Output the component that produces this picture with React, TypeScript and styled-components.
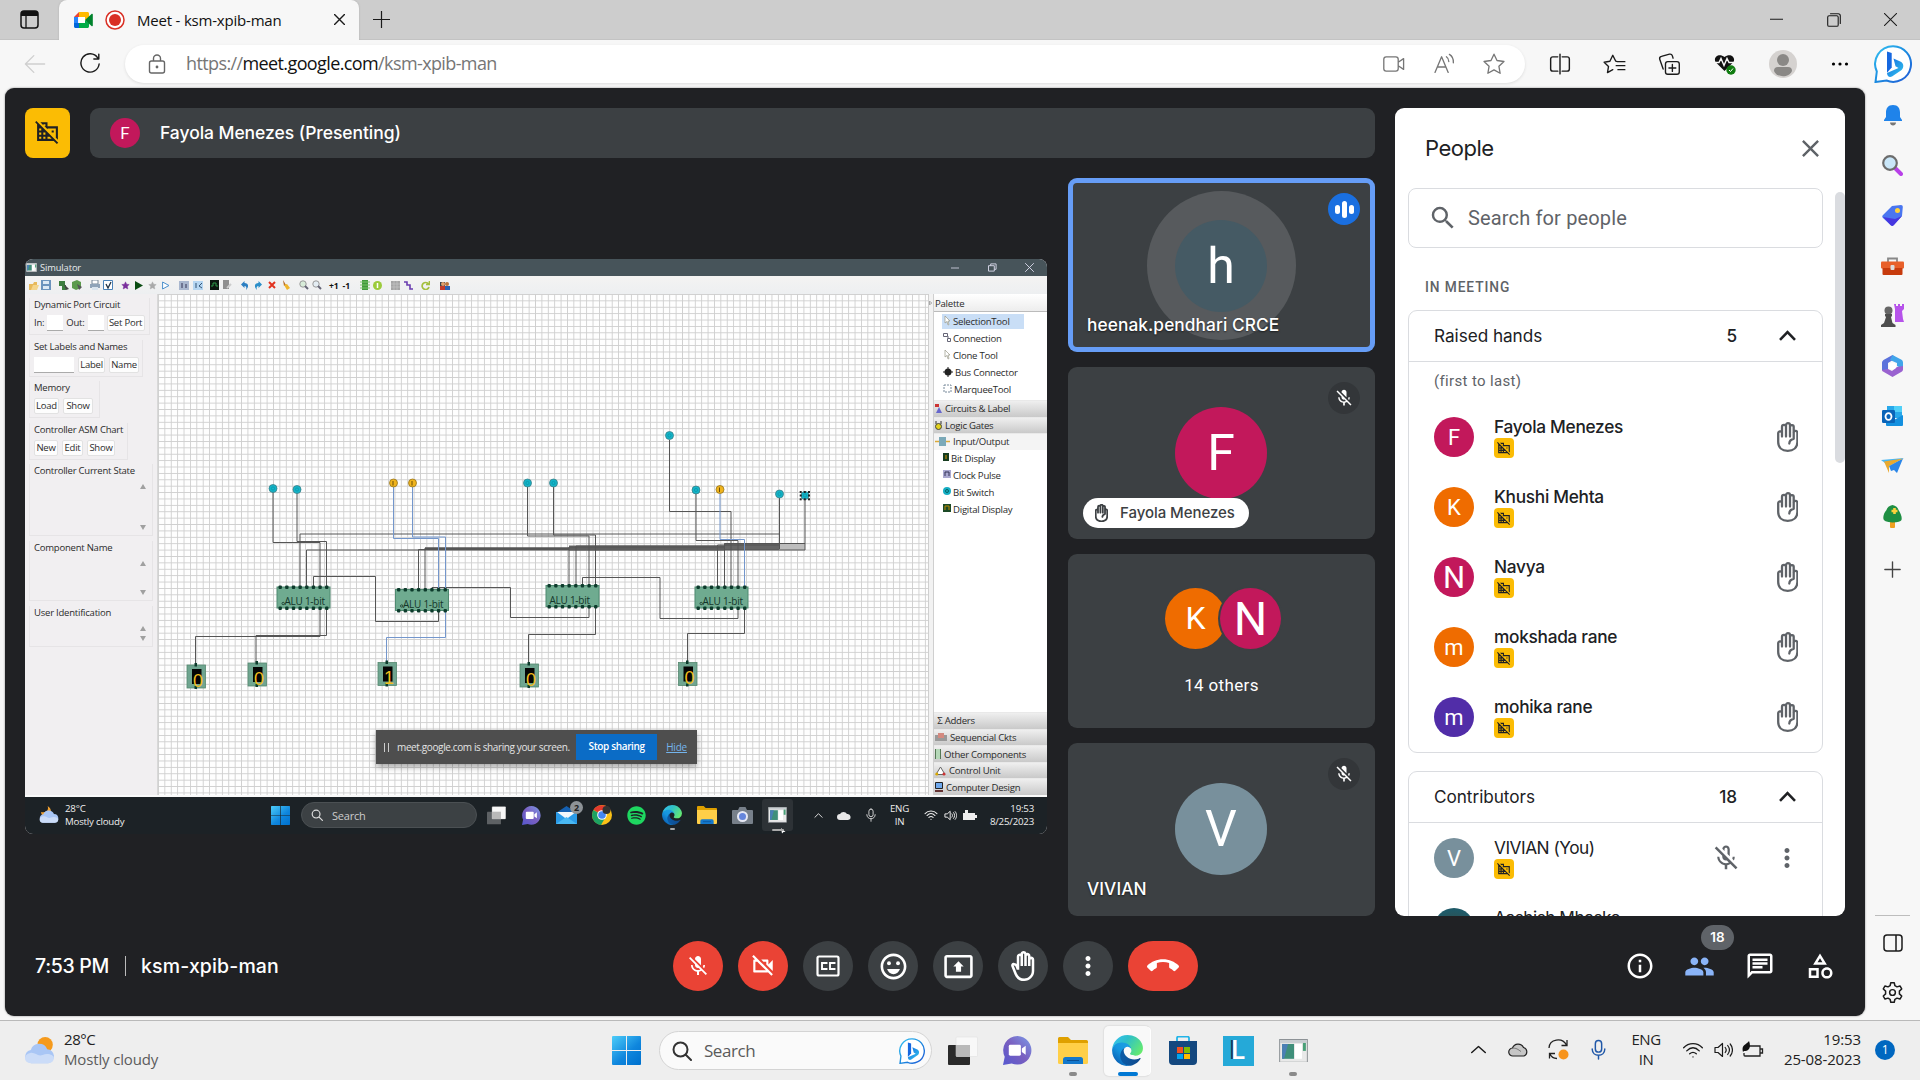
import React from "react";
import styled, { createGlobalStyle, css } from "styled-components";
import {
  MdMicOff, MdOutlineMicOff, MdOutlineVideocamOff, MdOutlineEmojiEmotions, MdOutlinePresentToAll,
  MdOutlineBackHand, MdMoreVert, MdCallEnd, MdInfoOutline, MdPeople, MdOutlineChat, MdOutlineCategory,
  MdDomainDisabled, MdSearch, MdClose,
} from "react-icons/md";
import { FaSpotify } from "react-icons/fa";

const segoe = `"Open Sans", "Noto Sans", sans-serif`;
const google = `Inter, Roboto, sans-serif`;

const Global = createGlobalStyle`
  * { box-sizing: border-box; }
  html, body { margin: 0; width: 1920px; height: 1080px; overflow: hidden; background: #f7f7f7; }
  body { font-family: ${segoe}; color: #202124; }
  svg { display: block; flex: none; }
`;

/* ---------- page frame ---------- */

const Screen = styled.div`
  width: 1920px; height: 1080px; display: grid; overflow: hidden;
  grid-template-rows: 40px 48px 932px 60px;
`;
const Body = styled.div`
  display: grid; grid-template-columns: 1860px 1fr; padding: 0 0 4px 5px; background: #f7f7f7;
`;

/* ---------- tab strip ---------- */

const TabStrip = styled.header`
  background: #cdcdcd; display: flex; align-items: center; border-bottom: 1px solid #c3c3c3;
`;
const StripButton = styled.div<{ $w: number }>`
  width: ${p => p.$w}px; height: 40px; display: flex; align-items: center; justify-content: center;
`;
const Tab = styled.div`
  width: 300px; height: 40px; align-self: flex-start; background: #f7f7f7; border-radius: 8px 8px 0 0;
  display: flex; align-items: center; padding-left: 15px; gap: 12px; font-size: 15px; letter-spacing: -0.2px;
  color: #111; flex: none; box-shadow: 0 0 2px #aaa; padding-bottom: 1px;
  svg:last-child { margin-left: auto; margin-right: 14px; }
`;
const WindowButtons = styled.div`
  margin-left: auto; display: flex; padding-right: 1px;
`;

/* ---------- address bar ---------- */

const Toolbar = styled.div`
  background: #f7f7f7; display: flex; align-items: center; padding-left: 23px;
`;
const Address = styled.div`
  width: 1400px; height: 38px; border-radius: 19px; background: #fff; margin-left: 24px; flex: none; box-shadow: 0 1px 3px #ddd;
  display: flex; align-items: center; padding: 0 19px 0 22px; font-size: 18px; letter-spacing: -0.61px; color: #767676;
  b { font-weight: 400; color: #111; }
  span { margin-left: 19px; margin-top: -2px; }
`;
const AddressIcons = styled.div`
  margin-left: auto; display: flex; gap: 26px; align-items: center;
`;
const ToolIcons = styled.div`
  display: flex; align-items: center; margin-left: 7px;
`;
const ToolSlot = styled.div<{ $w?: number }>`
  width: ${p => p.$w ?? 55}px; display: flex; justify-content: center;
`;

/* ---------- edge sidebar ---------- */

const Sidebar = styled.aside`
  display: flex; flex-direction: column; align-items: center; padding: 2px 0 0 0; height: 930px;
`;
const SideSlot = styled.div`
  height: 50.2px; width: 100%; display: flex; align-items: center; justify-content: center; flex: none;
`;
const SideRule = styled.div`
  width: 35px; height: 1px; background: #bdbdbd; margin: auto 0 2px;
`;

/* ---------- meet ---------- */

const Meet = styled.main`
  background: #202124; border-radius: 9px; height: 928px; display: grid; overflow: hidden;
  grid-template-columns: 1350px 450px; column-gap: 20px; grid-template-rows: 808px 1fr; padding: 20px 20px 0 20px;
  font-family: ${google}; box-shadow: 0 0 2px #777;
`;
const Stage = styled.section`
  display: grid; grid-template-columns: 1022px 307px; column-gap: 21px; grid-template-rows: 50px 738px; row-gap: 20px;
`;
const StageHead = styled.div`
  grid-column: 1 / 3; display: flex; gap: 20px;
`;
const DomainButton = styled.div`
  width: 45px; height: 50px; border-radius: 8px; background: #fbbc04; color: #202124; display: flex; align-items: center; justify-content: center;
  padding-bottom: 4px;
`;
const PresenterBar = styled.div`
  flex: 1; background: #3c4043; border-radius: 9px; display: flex; align-items: center; padding-left: 20px; gap: 20px;
  color: #fff; font-weight: 500; font-size: 17.5px; letter-spacing: -0.06px;
  span { margin-top: -2px; }
`;
const Avatar = styled.div<{ $s: number; $c: string; $f: number }>`
  width: ${p => p.$s}px; height: ${p => p.$s}px; border-radius: 50%; background: ${p => p.$c}; color: #fff; flex: none;
  display: flex; align-items: center; justify-content: center; font: 400 ${p => p.$f}px Roboto, sans-serif; letter-spacing: 0;
`;
const Tiles = styled.div`
  display: grid; grid-template-rows: 174px 172px 174px 173px; row-gap: 15px;
`;
const Tile = styled.div<{ $active?: boolean; $last?: boolean }>`
  position: relative; background: #3c4043; border-radius: 9px; display: flex; flex-direction: column; align-items: center; justify-content: center;
  padding: 0 1px ${p => (p.$last ? 1 : 0)}px 0;
  ${p => p.$active && css`box-shadow: inset 0 0 0 5px #669df6; padding-top: 1px;`}
`;
const VoiceRing = styled.div`
  width: 149px; height: 149px; border-radius: 50%; background: #575a5d; display: flex; align-items: center; justify-content: center;
`;
const TileChip = styled.div<{ $c: string }>`
  position: absolute; top: 15px; right: 15px; width: 32px; height: 32px; border-radius: 50%; background: ${p => p.$c};
  display: flex; align-items: center; justify-content: center; gap: 2px; color: #fff;
  i { width: 5px; height: 9px; border-radius: 3px; background: #fff; }
  i:nth-child(2) { height: 17px; }
`;
const TileName = styled.div`
  position: absolute; left: 19px; bottom: 15px; color: #fff; font-weight: 500; font-size: 17.3px; line-height: 24px; letter-spacing: 0.08px;
  text-shadow: 0 1px 2px rgba(0,0,0,.6);
`;
const HandPill = styled.div`
  position: absolute; left: 15px; bottom: 11px; height: 30px; width: 166px; border-radius: 15px; background: #fff; color: #3c4043;
  display: flex; align-items: center; padding: 0 0 1px 12px; gap: 12px; font-weight: 500; font-size: 15px; letter-spacing: -0.05px;
  white-space: nowrap;
`;
const Pair = styled.div`
  display: flex; margin: 2px 0 0 4px;
  div + div { margin-left: -6px; box-shadow: 0 0 0 2px #3c4043; }
`;
const Others = styled.div`
  color: #fff; font-size: 17px; line-height: 24px; margin-top: 24px; font-family: Roboto, sans-serif; letter-spacing: .35px; padding-left: 1px;
`;

/* ---------- meet bottom bar ---------- */

const BottomBar = styled.footer`
  grid-column: 1 / 3; display: grid; grid-template-columns: 648px 1fr auto; height: 100px; align-items: center; color: #fff;
`;
const Clock = styled.div`
  display: flex; align-items: center; font-size: 19.5px; font-weight: 500; padding: 0 0 1px 10px; letter-spacing: -0.3px; white-space: nowrap;
  i { width: 1px; height: 20px; background: #bbb; margin: 0 15px 0 16px; }
  span { letter-spacing: 0.12px; }
`;
const Controls = styled.div`
  display: flex; gap: 15px;
`;
const Round = styled.div<{ $red?: boolean; $w?: number }>`
  width: ${p => p.$w ?? 50}px; height: 50px; border-radius: 25px; background: ${p => (p.$red ? "#ea4335" : "#3c4043")};
  display: flex; align-items: center; justify-content: center; color: #fff;
`;
const PanelButtons = styled.div`
  display: flex; gap: 29.8px; padding-right: 10px; align-items: center;
`;
const Counted = styled.div`
  position: relative; color: #8ab4f8;
  span { position: absolute; left: 16.5px; top: -26px; width: 33px; height: 25px; border-radius: 13px; background: #5f6368; color: #fff; font-size: 13.5px; font-weight: 600; line-height: 25px; text-align: center; }
`;

/* ---------- people panel ---------- */

const Panel = styled.aside`
  background: #fff; border-radius: 9px; overflow: hidden; display: grid; grid-template-rows: 80px 728px; color: #202124;
`;
const PanelHead = styled.div`
  display: flex; align-items: center; justify-content: space-between; padding: 0 20.5px 0 30px; font-size: 22px; letter-spacing: -0.5px; color: #202124;
  svg { color: #5f6368; }
`;
const PanelBody = styled.div`
  display: grid; grid-template-columns: 415px 10px; padding-left: 13px; column-gap: 12px; overflow: hidden; align-items: start;
`;
const ScrollThumb = styled.div`
  margin-top: 4px; height: 271px; border-radius: 5px; background: #dadce0;
`;
const SearchBox = styled.div`
  height: 60px; border: 1px solid #dadce0; border-radius: 8px; display: flex; align-items: center; padding-left: 19px; gap: 10px;
  font: 400 20px Roboto, sans-serif; letter-spacing: .15px; color: #5f6368;
`;
const SectionName = styled.div`
  font: 500 13.75px/20px Roboto, sans-serif; letter-spacing: .9px; color: #5f6368; padding-left: 17px; margin: 29px 0 13px;
`;
const Card = styled.div`
  border: 1px solid #dadce0; border-radius: 9px; margin-bottom: 18px; height: 443px;
`;
const CardHead = styled.div`
  height: 51px; border-bottom: 1px solid #dadce0; display: grid; grid-template-columns: 1fr 40px 70px; align-items: center; padding: 0 0 2px 25px;
  font-size: 17.2px; letter-spacing: -0.05px;
  b { font-weight: 500; text-align: right; padding-right: 15px; }
  svg { justify-self: center; }
`;
const OrderNote = styled.div`
  height: 40px; padding-left: 25px; font: 400 15px/39px Roboto, sans-serif; letter-spacing: .35px; color: #5f6368;
`;
const Person = styled.div`
  height: 70px; display: grid; grid-template-columns: 40px 1fr auto; column-gap: 20px; align-items: center; padding: 0 20px 0 25px;
`;
const PersonText = styled.div<{ $regular?: boolean }>`
  display: grid; font-size: 17.3px; line-height: 22px; letter-spacing: ${p => (p.$regular ? "-0.5px" : "-0.3px")}; font-weight: ${p => (p.$regular ? 400 : 500)};
  color: #202124;
`;
const DomainBadge = styled.span`
  width: 20px; height: 20px; border-radius: 4px; background: #fbbc04; display: flex; align-items: center; justify-content: center;
`;
const PersonActions = styled.div`
  display: flex; align-items: center; gap: 31px; color: #5f6368;
`;
const HandSlot = styled.div`
  width: 29px; display: flex; justify-content: center;
`;
const Photo = styled.div`
  width: 40px; height: 40px; border-radius: 50%; background: radial-gradient(circle at 50% 60%, #31504f 30%, #1f5a68 70%);
`;

/* ---------- shared simulator window ---------- */

const Shared = styled.div`
  width: 1022px; height: 575px; margin-top: 81px; border-radius: 8px; overflow: hidden; display: grid; grid-template-rows: 17px 18px 503px 37px;
  font-family: ${segoe}; color: #2b2b2b; background: #f1eff1;
`;
const SimTitle = styled.div`
  background: #47545a; color: #e8ecee; display: flex; align-items: center; padding: 0 13px 0 1px; gap: 3px; font-size: 9.3px; letter-spacing: -0.1px;
`;
const SimWindowButtons = styled.div`
  margin-left: auto; display: flex; gap: 28.5px; align-items: center;
`;
const SimTools = styled.div`
  background: linear-gradient(#f4f3f2, #edeff1); display: flex; align-items: center; padding-left: 3.5px;
`;
const SimTool = styled.div<{ $w: number }>`
  width: ${p => p.$w + 0.1}px; height: 12px; display: flex; align-items: center; justify-content: flex-start; font-size: 8.5px; font-weight: 700; color: #111;
`;
const SimBody = styled.div`
  display: grid; grid-template-columns: 133px 770px 6px 113px; border-bottom: 2px solid #fafafa;
`;
const SimLeft = styled.div`
  padding: 4px 0 0 4px; display: flex; flex-direction: column; font-size: 9.5px; letter-spacing: -0.22px; background: #f1eff1; border-right: 1px solid #d8d8d8;
`;
const Group = styled.div<{ $w: number; $h: number; $gap?: number }>`
  width: ${p => p.$w}px; height: ${p => p.$h}px; margin-bottom: ${p => p.$gap ?? 4.5}px; display: flex; flex-direction: column; gap: 3px; flex: none;
  box-shadow: inset 0 -1px #e6e4e6, inset -1px 0 #e6e4e6, inset 1px 0 #e8e6e8; padding-left: 5px; line-height: 14px;
`;
const Fields = styled.div<{ $tight?: boolean }>`
  display: flex; align-items: center; gap: ${p => (p.$tight ? 3 : 4)}px; height: 16px;
`;
const Field = styled.div<{ $w: number }>`
  width: ${p => p.$w}px; height: 16px; background: #fff; border-bottom: 1px solid #aaa;
`;
const SmallButton = styled.div<{ $w: number }>`
  width: ${p => p.$w}px; height: 16px; background: #fdfdfd; border: 1px solid #e2e2e2; border-radius: 2px; text-align: center; line-height: 14px; white-space: nowrap;
`;
const ScrollArea = styled.div`
  flex: 1; margin-right: 7px; display: flex; flex-direction: column; align-items: flex-end; justify-content: space-between; padding: 3px 0 6px;
`;
const Canvas = styled.div`
  position: relative; overflow: hidden; background-color: #fefefe;
  background-image: linear-gradient(90deg, #cfcfcf 1px, transparent 1px), linear-gradient(#cfcfcf 1px, transparent 1px);
  background-size: 6.4px 6.4px;
`;
const ShareBar = styled.div`
  position: absolute; left: 218px; top: 436px; width: 321px; height: 34px; background: #4e4e4e; box-shadow: 0 3px 6px rgba(0,0,0,.35);
  display: flex; align-items: center; font-size: 10px; letter-spacing: -0.38px; color: #e4e4e4; padding-left: 8px; white-space: nowrap;
`;
const PauseMark = styled.i`
  width: 5px; height: 9px; border: solid #ccc; border-width: 0 1px; margin-right: 8px;
`;
const StopButton = styled.div`
  width: 81px; height: 26px; background: #0b6cc6; color: #fff; font-weight: 600; text-align: center; line-height: 25px; margin: 0 9px 0 auto; letter-spacing: -0.35px;
`;
const HideLink = styled.span`
  color: #74b4ec; text-decoration: underline; margin-right: 10px; letter-spacing: -0.2px;
`;
const Palette = styled.div`
  background: #fff; display: flex; flex-direction: column; font-size: 9.6px; letter-spacing: -0.25px; white-space: nowrap;
`;
const PaletteHead = styled.div`
  height: 18px; line-height: 19px; padding-left: 1px; background: linear-gradient(#fff, #ededed); border-bottom: 1px solid #bbb; margin-bottom: 1px;
`;
const PaletteItem = styled.div<{ $on?: boolean }>`
  height: 17px; margin: 0 23px 0 8px; padding-left: 1px; display: flex; align-items: center; gap: 2px; flex: none;
  svg { margin-top: -2px; }
  ${p => p.$on && css`background: #c9def6; height: 15px; margin-top: 1px; margin-bottom: 1px;`}
`;
const Drawer = styled.div<{ $flat?: boolean; $first?: boolean }>`
  height: 16.6px; display: flex; align-items: center; gap: 3px; padding-left: 1px; border-top: 1px solid #e9e9e9; flex: none;
  margin-top: ${p => (p.$first ? 2 : 0)}px;
  background: ${p => (p.$flat ? "#f4f4f4" : "linear-gradient(#efefef, #c9c9c9)")};
`;
const DrawerStack = styled.div`
  margin-top: auto;
`;
const Splitter = styled.div`
  background: #f2f2f2; border: solid #cfcfcf; border-width: 0 1px;
  padding-top: 7px;
`;
const SimTaskbar = styled.div`
  background: #1c2226; color: #eee; display: flex; align-items: center; padding: 0 13px 1px 14px; font-size: 9.7px; line-height: 13px; letter-spacing: -0.2px;
`;
const SimWeather = styled.div`
  display: flex; gap: 6px; width: 232px; align-items: center; 
`;
const SimSearch = styled.div`
  width: 176px; height: 26px; border-radius: 13px; background: #3c4144; border: 1px solid #4b5053; margin: 0 1.5px 0 11px; display: flex; align-items: center;
  gap: 9px; padding-left: 9px; font-size: 11px; color: #ccc; flex: none;
`;
const SimSlot = styled.div<{ $on?: boolean; $dot?: boolean }>`
  position: relative; width: 35.2px; height: 32px; display: flex; align-items: center; justify-content: center; flex: none;
  ${p => p.$on && css`background: #2d3236; border-radius: 3px; width: 31px; margin-left: 2px;`}
  ${p => (p.$on || p.$dot) && css`&::after { content: ""; position: absolute; bottom: ${p.$on ? 0 : 1}px; width: ${p.$on ? 12 : 5}px; height: 2px; border-radius: 1px; background: #aaa; }`}
`;
const MailBadge = styled.b`
  position: absolute; right: 1px; top: 2px; width: 13px; height: 13px; border-radius: 50%; background: #8d9397; color: #222; font-size: 9px; text-align: center;
`;
const PointerMark = styled.svg`
  position: absolute; right: 7px; bottom: -3px;
`;
const SimTray = styled.div`
  margin-left: auto; display: flex; align-items: center;
`;
const TrayText = styled.div<{ $w: number; $right?: boolean }>`
  width: ${p => p.$w}px; text-align: ${p => (p.$right ? "right" : "center")}; white-space: nowrap;
`;

/* ---------- windows taskbar ---------- */

const Taskbar = styled.footer`
  background: #eeeeee; border-top: 1px solid #b9b9b9; display: flex; align-items: center; padding: 0 24px; font-size: 15px; letter-spacing: -0.45px; color: #222;
`;
const Weather = styled.div`
  width: 588px; display: flex; align-items: center; gap: 9px; line-height: 20px;
  small { font-size: 15px; color: #5c5c5c; display: block; letter-spacing: -0.15px; }
  div { padding-bottom: 4px; }
`;
const SearchPill = styled.div`
  width: 273px; height: 39px; border-radius: 20px; border: 1px solid #d4d4d4; background: #fafafa; margin: 0 3px 0 18px; display: flex; align-items: center;
  padding: 0 6px 0 12px; font-size: 17px; color: #5a5a5a;
  span { margin-left: 12px; flex: 1; padding-bottom: 1px; }
`;
const TaskSlot = styled.div<{ $on?: boolean; $dot?: boolean }>`
  position: relative; width: 55.1px; height: 50px; display: flex; align-items: center; justify-content: center;
  ${p => p.$on && css`
    &::before { content: ""; position: absolute; inset: 0 5px 0 4px; border-radius: 5px; background: #f9f9f9; box-shadow: 2px 0 0 -1px #fff, 0 0 1px 1px #e0e0e0; }
    svg { position: relative; }
  `}
  ${p => (p.$on || p.$dot) && css`&::after { content: ""; position: absolute; bottom: 0; width: ${p.$on ? 20 : 8}px; height: 4px; border-radius: 2px; background: ${p.$on ? "#0078d4" : "#8a8a8a"}; }`}
`;
const Tray = styled.div`
  margin-left: auto; display: flex; align-items: center; line-height: 19.5px; padding-bottom: 2px;
`;
const TraySlot = styled.div<{ $w: number }>`
  width: ${p => p.$w}px; display: flex; justify-content: center;
`;
const DateText = styled(TrayText)`
  letter-spacing: -0.12px;
`;
const Notice = styled.div`
  width: 20px; height: 20px; border-radius: 50%; background: #0067c0; color: #fff; font-size: 12px; line-height: 19px; text-align: center; margin: 0 1px 0 14px;
`;

/* ---------- drawn icons ---------- */

const Line = (p: { d: string; s?: number; w?: number; c?: string; box?: number; h?: number }) => (
  <svg width={p.s ?? 20} height={p.h ?? p.s ?? 20} viewBox={`0 0 ${p.box ?? 20} ${p.box ?? 20}`} fill="none" stroke={p.c ?? "#1b1b1b"} strokeWidth={p.w ?? 1.3} strokeLinecap="round" strokeLinejoin="round">
    <path d={p.d} />
  </svg>
);
const STAR = "M10 1.8l2.5 5.3 5.8.8-4.2 4 1 5.8-5.1-2.8-5.1 2.8 1-5.8-4.2-4 5.8-.8z";
const WIFI = "M1.5 8C6 3 14 3 18.500 8M4.300 10.800C8 7 12 7 15.700 10.800M7 13.500c2-1.800 4-1.800 6 0M10 16.200v.1";
const VOL = "M2 7.500h3l4.500-4v13l-4.500-4h-3zM12.200 7.500c1.200 1.500 1.200 3.500 0 5M14.700 5.500c2.200 2.800 2.200 6.200 0 9M17.200 4c3 3.500 3 8.500 0 12";
const MIC = "M10 1.500a3 3 0 0 1 3 3v5a3 3 0 0 1-6 0v-5a3 3 0 0 1 3-3zM4 9.500c0 8 12 8 12 0M10 15.500v3.500";

const CollapseMark = () => (
  <svg width="17" height="11" viewBox="0 0 17 11" fill="none" stroke="#202124" strokeWidth="2.600"><path d="M1 9.800L8.500 2.200 16 9.800" /></svg>
);
const RaisedHand = ({ h, w = 2.3 }: { h: number; w?: number }) => (
  <svg width={h * 0.72} height={h} viewBox="0 0 21.600 30" fill="none" stroke="currentColor" strokeWidth={w} strokeLinecap="round" strokeLinejoin="round">
    <path d="M5 14.500V4.800a2 2 0 0 1 4 0M5 10.500a2 2 0 0 0-3.800.5v9C1.200 25.500 5 28.800 10.700 28.800s9.700-3.300 9.700-8.800v-9a1.900 1.900 0 0 0-3.800-.3M9 14.500V3.200a2 2 0 0 1 4 0v11.300M13 4.800a1.850 1.850 0 0 1 3.700.4v11.600c-2.600.4-4.200 2-4.400 4.700" />
  </svg>
);
const MeetLogo = () => (
  <svg width="19" height="16" viewBox="0 0 19 16">
    <path d="M0 5h4v6H0z" fill="#2684fc" /><path d="M0 5L5 0v5z" fill="#ea4335" />
    <path d="M5 0h8.500c.8 0 1.500.7 1.500 1.500V7l-4 1V5H5z" fill="#ffba00" />
    <path d="M5 11h6V8l4 3v3.500c0 .8-.7 1.500-1.500 1.500H5z" fill="#00ac47" />
    <path d="M0 11h5v5H1.500C.7 16 0 15.300 0 14.500z" fill="#0066da" /><path d="M11 8l6.500-6c.7-.5 1.300-.2 1.300.6v10.800c0 .8-.6 1.100-1.300.6z" fill="#00832d" />
    <path d="M5 5h6v6H5z" fill="#fff" />
  </svg>
);
const RecordMark = () => (
  <svg width="20" height="20" viewBox="0 0 20 20"><circle cx="10" cy="10" r="9" fill="#fff" stroke="#d93025" strokeWidth="1.500" /><circle cx="10" cy="10" r="6" fill="#d93025" /></svg>
);
const Bing = ({ s }: { s: number }) => (
  <svg width={s} height={s} viewBox="0 0 38 38">
    <defs>
      <linearGradient id="bingRing" x1="0" y1="0" x2="1" y2="1"><stop offset="0" stopColor="#35c1f1" /><stop offset=".5" stopColor="#1b8be0" /><stop offset="1" stopColor="#2259d6" /></linearGradient>
      <linearGradient id="bingB" x1="0" y1="0" x2="1" y2="1"><stop offset="0" stopColor="#1668e0" /><stop offset="1" stopColor="#32c8ee" /></linearGradient>
    </defs>
    <path d="M19 1.200a17.800 17.800 0 1 1-6.500 34.300L1.500 37l1.300-10.500A17.800 17.800 0 0 1 19 1.200z" fill="#fff" stroke="url(#bingRing)" strokeWidth="2" />
    <path d="M13 6.500l4.700 1.600v14.500l-4.700 5.200z" fill="#1668e0" />
    <path d="M19.500 13.500l7.300 3.200c3.200 1.600 3.200 6 .8 8.300L18 31.500c-3 1.500-5-.8-5-3.500l11.500-5-3-1.700z" fill="url(#bingB)" />
  </svg>
);
const EdgeLogo = ({ s }: { s: number }) => (
  <svg width={s} height={s} viewBox="4 4 257 257">
    <defs>
      <linearGradient id="edgeA" x1=".2" y1=".5" x2="1" y2=".5"><stop stopColor="#0c59a4" /><stop offset="1" stopColor="#114a8b" /></linearGradient>
      <linearGradient id="edgeB" x1=".7" y1=".2" x2=".2" y2=".9"><stop stopColor="#1b9de2" /><stop offset=".4" stopColor="#1595df" /><stop offset="1" stopColor="#0a5fb3" /></linearGradient>
      <linearGradient id="edgeC" x1="0" y1=".2" x2="1" y2=".7"><stop stopColor="#35c1f1" /><stop offset=".4" stopColor="#2fc0c8" /><stop offset="1" stopColor="#66eb6e" /></linearGradient>
    </defs>
    <path fill="url(#edgeA)" d="M235.680 195.460a93.730 93.730 0 0 1-10.540 4.710 101.870 101.870 0 0 1-35.900 6.460c-47.320 0-88.540-32.550-88.540-74.320A31.480 31.480 0 0 1 117.130 105c-42.800 1.800-53.800 46.400-53.800 72.530 0 73.880 68.090 81.370 82.760 81.370 7.910 0 19.840-2.300 27-4.560l1.310-.44a128.340 128.340 0 0 0 66.600-52.800 4 4 0 0 0-5.320-5.640z" />
    <path fill="url(#edgeB)" d="M110.340 246.340A79.200 79.200 0 0 1 87.600 225a80.720 80.720 0 0 1 29.530-120c3.120-1.470 8.450-4.130 15.540-4a32.350 32.350 0 0 1 25.690 13 31.880 31.880 0 0 1 6.360 18.660c0-.21 24.460-79.600-80-79.600-43.900 0-80 41.660-80 78.210a130.150 130.150 0 0 0 12.110 56 128 128 0 0 0 156.380 67.110 75.550 75.550 0 0 1-62.780-8z" />
    <path fill="url(#edgeC)" d="M156.940 153.780c-.81 1.050-3.300 2.500-3.300 5.660 0 2.610 1.700 5.120 4.720 7.230 14.380 10 41.490 8.680 41.560 8.680a59.560 59.560 0 0 0 30.270-8.350 61.380 61.380 0 0 0 30.430-52.880c.26-22.410-8-37.310-11.340-43.910C228.090 28.760 182.350 5 132.610 5a128 128 0 0 0-128 126.200c.48-36.540 36.800-66.050 80-66.050 3.500 0 23.460.34 42 10.070 16.340 8.580 24.900 18.940 30.850 29.210 6.180 10.670 7.280 24.150 7.280 29.520s-2.740 13.330-7.800 19.830z" />
  </svg>
);
const WinLogo = ({ s, id }: { s: number; id: string }) => (
  <svg width={s} height={s} viewBox="0 0 29 29">
    <defs><linearGradient id={id} gradientUnits="userSpaceOnUse" x1="0" y1="0" x2="26" y2="29"><stop stopColor="#4dcdf9" /><stop offset=".6" stopColor="#0f86dd" /><stop offset="1" stopColor="#0072cf" /></linearGradient></defs>
    <path fill={`url(#${id})`} d="M0 1q0-1 1-1h13v14H0zM15 0h13q1 0 1 1v13H15zM0 15h14v14H1q-1 0-1-1zM15 15h14v13q0 1-1 1H15z" />
  </svg>
);
const CloudIcon = ({ s, night }: { s: number; night?: boolean }) => (
  <svg width={s} height={s * 0.86} viewBox="0 0 30 26">
    {night ? <path d="M13 0c2 6-2 11-10 9 0 6 6 8 11 6s6-11-1-15z" fill="#f0a030" /> : <circle cx="20.500" cy="7.500" r="7.500" fill="#f59a1c" />}
    <path d="M7 25.500a6.500 6.500 0 0 1-.5-12.900A8.500 8.500 0 0 1 22.500 12a6.800 6.800 0 0 1 1 13.500z" fill="#a9c6f5" />
    <path d="M7 25.500c-8 0-8-9-1-10 5-1 7 4 12 2s11 0 11 3-2 5-5.500 5z" fill="#cbdcf8" />
  </svg>
);
const ChatLogo = ({ s }: { s: number }) => (
  <svg width={s} height={s} viewBox="0 0 30 30">
    <defs><linearGradient id="chatFill" x1="1" y1="0" x2="0" y2="1"><stop stopColor="#7b9be8" /><stop offset=".5" stopColor="#7a5fc0" /><stop offset="1" stopColor="#5558cf" /></linearGradient></defs>
    <path d="M15 0a14.800 14.800 0 1 1-6 28.500L0 30l1.800-8.500A14.800 14.800 0 0 1 15 0z" fill="url(#chatFill)" />
    <rect x="6" y="9" width="12.500" height="11.500" rx="1.500" fill="#fff" /><path d="M19.500 13l4-3v9.500l-4-3z" fill="#fff" />
  </svg>
);
const FolderLogo = ({ s }: { s: number }) => (
  <svg width={s} height={s * 0.9} viewBox="0 0 30 27">
    <path d="M0 1.500Q0 0 1.500 0H10l3 3h15.500Q30 3 30 4.500V12H0z" fill="#dfa000" />
    <path d="M0 6h30v19.500q0 1.500-1.500 1.500h-27Q0 27 0 25.500z" fill="#ffcf48" />
    <path d="M5 27v-4.500Q5 20 7.500 20h15q2.500 0 2.500 2.500V27z" fill="#1478cc" /><path d="M9 23.500h12" stroke="#0a4f94" />
  </svg>
);
const TaskView = ({ s, dark }: { s: number; dark: string }) => (
  <svg width={s} height={s} viewBox="0 0 30 30"><rect x="0" y="9" width="22" height="20" rx="1" fill={dark} /><rect x="8" y="1" width="21.500" height="19.500" rx="1" fill="#f8f8f8" stroke="#ddd" strokeWidth=".5" /><rect x="8" y="9" width="14" height="11.500" fill="#b9b9b9" /></svg>
);
const SimLogo = ({ s }: { s: number }) => (
  <svg width={s} height={s * 0.82} viewBox="0 0 29 24">
    <rect x=".5" y=".5" width="28" height="23" fill="#e9e9e9" stroke="#8d9296" /><path d="M1 1h27v3H1z" fill="#c9ced2" />
    <rect x="3" y="5" width="12" height="15" fill="#3f8f7a" /><path d="M3 5h6l-4 15H3z" fill="#4a7fb5" /><rect x="16" y="5" width="7" height="15" fill="#fff" /><rect x="24" y="4" width="3" height="8" fill="#49a078" />
  </svg>
);
const StoreLogo = () => (
  <svg width="30" height="30" viewBox="0 0 30 30">
    <path d="M9 6V2q0-1.300 1.300-1.300h9.400Q21 .7 21 2v4" fill="none" stroke="#22b4e8" strokeWidth="1.800" /><path d="M1 5h28v20q0 4-4 4H5q-4 0-4-4z" fill="#14487f" />
    <path d="M9 11h6v6H9z" fill="#f25022" /><path d="M16 11h6v6h-6z" fill="#7fba00" /><path d="M9 18h6v5H9z" fill="#00a4ef" /><path d="M16 18h6v5h-6z" fill="#ffb900" />
  </svg>
);
const LogoL = styled.div`
  width: 31px; height: 30px; background: #25a9d8; color: #fff; font: 600 25px/29px Inter, sans-serif; text-align: center; text-shadow: -2px 0 #14375c;
`;
const Chrome = () => (
  <svg width="20" height="20" viewBox="0 0 20 20"><circle cx="10" cy="10" r="10" fill="#fbc116" /><path d="M10 10L1.500 4.800A10 10 0 0 1 18.500 5z" fill="#e33b2e" /><path d="M10 10L1.400 5A10 10 0 0 0 9 20l4-7z" fill="#1da362" /><circle cx="10" cy="10" r="4.800" fill="#fff" /><circle cx="10" cy="10" r="3.800" fill="#4587f3" /><circle cx="14.500" cy="5" r="4" fill="#333" /></svg>
);
const Mail = () => (
  <svg width="21" height="18" viewBox="0 0 21 18"><path d="M0 7l10.500-7L21 7z" fill="#1560b0" /><path d="M0 6h21v12H0z" fill="#2a9be8" /><path d="M1 6h19l-9.500 7z" fill="#f3f7fb" /><path d="M0 18l10.500-7L21 18z" fill="#49b8f3" /></svg>
);
const Camera = () => (
  <svg width="21" height="18" viewBox="0 0 21 18"><path d="M1 4h5l1.500-3h6L15 4h5q1 0 1 1v12q0 1-1 1H1q-1 0-1-1V5q0-1 1-1z" fill="#77808a" /><circle cx="10.500" cy="10.500" r="5.500" fill="#e7e9f5" /><circle cx="10.500" cy="10.500" r="3.500" fill="#6686dc" /></svg>
);
const Arrow = ({ down }: { down?: boolean }) => (
  <svg width="6" height="5" viewBox="0 0 6 5"><path d={down ? "M0 0h6L3 5z" : "M0 5h6L3 0z"} fill="#a0a0a0" /></svg>
);
const CcIcon = () => (
  <svg width="24" height="22" viewBox="0 0 24 22" fill="none" stroke="#fff" strokeWidth="2.200"><rect x="1.500" y="1.500" width="21" height="19" rx="1.500" /><path d="M10.500 9V8H6v6h4.500v-1M18.500 9V8H14v6h4.500v-1" strokeWidth="1.900" /></svg>
);

const sideIcons: React.ReactNode[] = [
  <svg key="bell" width="18" height="21" viewBox="0 0 18 21"><path d="M9 0c5 0 7 3.500 7 7.500V12l2 3v1H0v-1l2-3V7.500C2 3.500 4 0 9 0z" fill="#1f83ea" /><path d="M6 17.500h6c0 4-6 4-6 0z" fill="#777" /></svg>,
  <svg key="find" width="21" height="21" viewBox="0 0 21 21"><path d="M13 13l6 6" stroke="#b840e8" strokeWidth="4" strokeLinecap="round" /><circle cx="8" cy="8" r="6.800" fill="#c9e6f8" stroke="#6c6c6c" strokeWidth="2.200" /></svg>,
  <svg key="tag" width="21" height="21" viewBox="0 0 21 21"><path d="M10 1l9-1q2 0 1.800 2L20 11l-8.500 9q-1.500 1.500-3 0L1 13q-1.500-1.500 0-3z" fill="#4a76f0" /><path d="M1 12l8 8.500q1.500 1 3-.5l8-9-7 3z" fill="#4636e0" /><circle cx="15.500" cy="5.500" r="2.500" fill="#ffd23c" /></svg>,
  <svg key="box" width="23" height="18" viewBox="0 0 23 18"><path d="M7 5V1.500h9V5" fill="none" stroke="#888" strokeWidth="1.800" /><rect y="4.500" width="23" height="7" rx="1" fill="#e8602a" /><path d="M1.500 11h20v6q0 1-1 1h-18q-1 0-1-1z" fill="#c73b0d" /><rect x="9.500" y="8" width="4" height="5" rx="1" fill="#ddd" /></svg>,
  <svg key="chess" width="23" height="23" viewBox="0 0 23 23"><path d="M13 0h2v2h2V0h2v2h2V0h2v5l-2 2 1 8 1 3h-9V5z" fill="#b653ea" /><circle cx="7.500" cy="6.500" r="4" fill="#666" /><path d="M4 10h7v2l-1 1 1.500 6 3 2v2H0v-2l3-2 2-6-1-1z" fill="#4d4d4d" /></svg>,
  <svg key="m365" width="21" height="22" viewBox="0 0 21 22"><path d="M10.500 0l-9 5Q0 6 0 7.500V15l6 3V8l8-5z" fill="#5b72dc" /><path d="M10.500 0L20 5q1 1 1 2.500V14l-6-3V8L8 5z" fill="#41a5ea" /><path d="M0 15q0 1 1 1.500L10.500 22 20 16.500q1-1 1-2V11l-6 1-5 4-4-2z" fill="#9a62d0" /><circle cx="10.500" cy="11" r="3.600" fill="#fff" /></svg>,
  <svg key="outlook" width="21" height="20" viewBox="0 0 21 20"><path d="M5 0h15v12H5z" fill="#28a8ea" /><path d="M12 0h8v6h-8z" fill="#50d0f8" /><path d="M4 10l8 4 9-5v10q0 1-1 1H5q-1 0-1-1z" fill="#1490df" /><rect y="4" width="13" height="13" rx="1.200" fill="#0a64b8" /><ellipse cx="6.500" cy="10.500" rx="3" ry="3.400" fill="none" stroke="#fff" strokeWidth="1.800" /></svg>,
  <svg key="send" width="23" height="16" viewBox="0 0 23 16"><path d="M0 2L23 0 8 8z" fill="#49b6f2" /><path d="M22 .5L16 15l-3-3-3 1-2-5z" fill="#2b86e8" /><path d="M3 3.500L22 .5 8 8v7z" fill="#e9a92f" /></svg>,
  <svg key="tree" width="19" height="23" viewBox="0 0 19 23"><rect x="7" y="15" width="5" height="8" rx="1" fill="#f0a020" /><path d="M9.500 0q5 1 6 5 4 6 3 10-1 2-9 2.500Q0 17 .3 13 .5 8 3.500 5q1-4 6-5z" fill="#1f8f43" /><path d="M11.500 3v6M8.500 6h6" stroke="#ffd23c" strokeWidth="2.600" /></svg>,
];

const PlusSlot = styled(SideSlot)`
  padding-top: 5px;
`;

const simTools: { w: number; node: React.ReactNode }[] = [
  { w: 12.5, node: <svg width="10" height="9"><path d="M0 3h4l1-2h3v8H0z" fill="#e7b95b" /><path d="M2 9l2-5h6L8 9z" fill="#f4d58c" /></svg> },
  { w: 17.5, node: <svg width="10" height="10"><path d="M0 0h10v10H0z" fill="#6b93bd" /><path d="M2 1h6v3H2zM2 6h6v3H2z" fill="#dbe8f4" /></svg> },
  { w: 13.5, node: <svg width="10" height="10"><path d="M0 1h6v5H0zM3 5h4v5H3z" fill="#3c7d3e" /><path d="M5 4l5 5-3 1z" fill="#444" /></svg> },
  { w: 18, node: <svg width="10" height="10"><path d="M0 2l5-2 4 2v6l-5 2-4-2z" fill="#5c9a4c" /><path d="M5 4l5 3-3 3z" fill="#555" /></svg> },
  { w: 13, node: <svg width="10" height="10"><path d="M2 0h6v4H2z" fill="#fff" stroke="#789" /><path d="M0 4h10v4H0z" fill="#8fa3b8" /><path d="M2 7h6v3H2z" fill="#d9e4ee" /></svg> },
  { w: 17.5, node: <svg width="10" height="10"><path d="M.5.5h9v9h-9z" fill="#fff" stroke="#4a82b8" /><path d="M3 4l2 4 3-6" fill="none" stroke="#234" strokeWidth="1.300" /></svg> },
  { w: 14, node: <svg width="9" height="9" viewBox="0 0 20 20"><path d={STAR} fill="#7a2f9c" stroke="#7a2f9c" /></svg> },
  { w: 13, node: <svg width="8" height="9"><path d="M0 0l8 4.500L0 9z" fill="#0a4d12" /></svg> },
  { w: 13.5, node: <svg width="9" height="9" viewBox="0 0 20 20"><path d={STAR} fill="#a9a9a9" stroke="#a9a9a9" /></svg> },
  { w: 17, node: <svg width="8" height="9"><path d="M.6 1l6.400 3.500L.6 8z" fill="#fff" stroke="#4a8fcc" /></svg> },
  { w: 13.5, node: <svg width="10" height="9"><path d="M0 0h10v9H0z" fill="#a9b7cf" /><path d="M3 2v5M7 3v4" stroke="#335" /></svg> },
  { w: 17, node: <svg width="10" height="9"><path d="M0 0h10v9H0z" fill="#b6d6f2" /><path d="M3 2v5M9 2L6 5l3 2" stroke="#357" fill="none" /></svg> },
  { w: 13.5, node: <svg width="9" height="10"><path d="M0 0h9v10H0z" fill="#0c1710" /><path d="M1 6h2V3h3v3h2" fill="none" stroke="#2f9c4a" /></svg> },
  { w: 18, node: <svg width="9" height="10"><path d="M0 0h6v9H0z" fill="#8f8f8f" /><path d="M4 8l4-4" stroke="#ccc" strokeWidth="2" /></svg> },
  { w: 13, node: <svg width="8" height="9"><path d="M0 3.500L3.500 0v2C8 2 8 6 5 9c1-3 0-4-1.500-4v2z" fill="#2c7fc2" /></svg> },
  { w: 13, node: <svg width="8" height="9"><path d="M8 3.500L4.500 0v2C0 2 0 6 3 9c-1-3 0-4 1.500-4v2z" fill="#2c8fc9" /></svg> },
  { w: 14, node: <svg width="8" height="8"><path d="M1 1l6 6M7 1L1 7" stroke="#e2331f" strokeWidth="2" /></svg> },
  { w: 17, node: <svg width="8" height="10"><path d="M1 0l3 5-2 1z" fill="#b46a28" /><path d="M2 5l3-1 3 4-3 2z" fill="#efb52c" /></svg> },
  { w: 13.5, node: <svg width="10" height="10"><circle cx="4" cy="4" r="3.200" fill="#d8ecd9" stroke="#999" /><path d="M6 6l3 3" stroke="#667" strokeWidth="2" /></svg> },
  { w: 16.5, node: <svg width="10" height="10"><circle cx="4" cy="4" r="3.200" fill="#e4edf3" stroke="#999" /><path d="M6 6l3 3" stroke="#667" strokeWidth="2" /></svg> },
  { w: 13.5, node: "+1" },
  { w: 17, node: "-1" },
  { w: 13.5, node: <svg width="10" height="10"><path d="M2 0h6v10H2z" fill="#3f9a3b" /><path d="M0 2h10M0 5h10M0 8h10" stroke="#79c36b" /></svg> },
  { w: 18, node: <svg width="9" height="9"><circle cx="4.500" cy="4.500" r="4.500" fill="#9ccb3c" /><path d="M4.500 2v5" stroke="#fff" strokeWidth="1.500" /></svg> },
  { w: 13, node: <svg width="9" height="9"><path d="M0 0h9v9H0z" fill="#a5a5a5" /><path d="M0 3h9M0 6h9M3 0v9M6 0v9" stroke="#c9c9c9" strokeWidth=".6" /></svg> },
  { w: 17, node: <svg width="9" height="9"><path d="M0 1h3v3h3v4h3" fill="none" stroke="#6a3cb0" strokeWidth="1.600" /></svg> },
  { w: 18, node: <svg width="9" height="9"><path d="M7.500 3A3.500 3.500 0 1 0 8 6M8.500 0v3.500H5" fill="none" stroke="#a4bf3f" strokeWidth="1.700" /></svg> },
  { w: 12, node: <svg width="10" height="9"><path d="M0 1h5v7H0z" fill="#3c4450" /><circle cx="3" cy="3" r="2" fill="#e3a06a" /><circle cx="7" cy="3" r="2" fill="#b9743c" /><path d="M0 5h5v4H0z" fill="#c23b2c" /><path d="M5 5h5v4H5z" fill="#2b62b5" /></svg> },
];

/* ---------- circuit ---------- */

const WireText = styled.text`
  font-family: ${segoe}; font-size: 10px; fill: #14352a;
`;
const Digit = styled.text`
  font-family: "Liberation Sans", Arial, sans-serif; font-size: 18px; fill: #f2bd1d;
`;

const greyWires = [
  "M273 492V542.500H320V587", "M297 493V541.500H326.500V587", "M300 587V534H779.500", "M306.500 587V550H805", "M313.500 587V576.500H375.500V621.500H438.500V611",
  "M320 608V636.500H195.500V666", "M326.500 608V635.500H256V664", "M418.500 588V549.500H569", "M425 588V548H724", "M432 588V587.500H510.500V617.500H589V607",
  "M527.500 487V536H589V585", "M553.500 487V535H595.500V585", "M569 585V547H724", "M576 585V546H724", "M582.500 585V577.500H660V618.500H738V608",
  "M595.500 607V634.500H528.500V664", "M717.500 586V545H779", "M724.500 586V543.500H805", "M731 586V511.500H669.500V440", "M696 494V540.500H738V586",
  "M744.500 608V633.500H687.500V663", "M779.500 498V549", "M805 499V550",
];
const blueWires = ["M393.500 487V538.500H438.500V588", "M412.500 487V537H445.500V588", "M445.500 611V637.500H386.500V663", "M720 494V539.500H744.500V586"];
const cyanDots = [[273, 488.5], [297, 489.5], [527.5, 483], [553.5, 483], [669.5, 435.5], [696, 490], [779.5, 494], [805, 495.5]];
const goldDots = [[393.5, 483], [412.5, 483], [720, 489.5]];
const handles = [[800.7, 492], [804.8, 492], [809, 492], [800.7, 495.5], [809, 495.5], [800.7, 499.3], [804.8, 499.3], [809, 499.3]];
const alus = [[277, 587, true], [395.5, 589.5, true], [546, 585.5, false], [695, 587, true]] as [number, number, boolean][];
const displays = [[187, 665, "0"], [248, 663, "0"], [378, 662.5, "1"], [520, 664, "0"], [678.5, 662.5, "0"]] as [number, number, string][];

const Circuit = () => (
  <svg width="770" height="501" viewBox="158 294 770 501">
    <path d="M425 547.500h144v2.500h-144z" fill="#555" />
    <path d="M569 545.500h155v5h-155z" fill="#6b6b6b" />
    <path d="M724 543.500h55.500v6.500H724z" fill="#666" />
    <path d="M779.500 543.500H805v6.500h-25.500z" fill="#bdbdbd" />
    {greyWires.map(d => <path key={d} d={d} fill="none" stroke="#555" strokeWidth="1" />)}
    {blueWires.map(d => <path key={d} d={d} fill="none" stroke="#7396cc" strokeWidth="1" />)}
    {cyanDots.map(([x, y]) => <g key={`${x}`}><circle cx={x} cy={y} r="4" fill="#12b5c9" stroke="#3d7f88" strokeWidth=".8" /><circle cx={x} cy={y} r="1.600" fill="none" stroke="#0b8c9d" strokeWidth=".6" /></g>)}
    {goldDots.map(([x, y]) => <g key={`${x}`}><circle cx={x} cy={y} r="4" fill="#f0b41c" stroke="#96741c" strokeWidth=".8" /><path d={`M${x - 0.5} ${y - 2}v4.500`} stroke="#6b4e06" strokeWidth="1" /></g>)}
    {handles.map(([x, y]) => <rect key={`${x}-${y}`} x={x - 1} y={y - 1} width="2" height="2" fill="#222" />)}
    {alus.map(([x, y, dot]) => (
      <g key={x}>
        <rect x={x} y={y} width="53" height="21" fill="#6fab90" stroke="#4f8a70" strokeWidth="1" />
        {Array.from({ length: 8 }, (_, i) => <React.Fragment key={i}><rect x={x + 1.5 + i * 6.65} y={y - 1.5} width="3.400" height="3.400" rx="1" fill="#0d3b2c" /><rect x={x + 1.5 + i * 6.65} y={y + 19.5} width="3.400" height="3.400" rx="1" fill="#0d3b2c" /></React.Fragment>)}
        <WireText x={x + (dot ? 7.5 : 3.5)} y={y + 18} textLength="40.500">ALU 1-bit</WireText>
        {dot && <circle cx={x + 6.2} cy={y + 16.5} r="1.200" fill="none" stroke="#14352a" strokeWidth=".8" />}
      </g>
    ))}
    {displays.map(([x, y, v]) => (
      <g key={x}>
        <rect x={x} y={y} width="18.500" height="23" fill="#6fa590" stroke="#55886f" strokeWidth=".8" />
        <rect x={x + 7.5} y={y - 2} width="2.500" height="3.500" fill="#0d3b2c" /><rect x={x + 7.5} y={y + 21} width="2.500" height="3" fill="#0d3b2c" />
        <rect x={x + 5} y={y + 4} width="9.500" height="15" fill="#050505" />
        <Digit x={x + 6} y={y + 21.5}>{v}</Digit>
      </g>
    ))}
  </svg>
);

/* ---------- palette icons ---------- */

const Cursor = () => <svg width="8" height="10"><path d="M2 0v7l2-1.500L5 9l1-.5L5 5h2z" fill="#fff" stroke="#998" strokeWidth=".7" /></svg>;
const Chip = ({ c, m }: { c: string; m: string }) => <svg width="8" height="9"><path d="M0 0h8v8H0z" fill={c} /><path d="M2 6V2h4v4" fill="none" stroke={m} /></svg>;

const Simulator = () => (
  <Shared>
    <SimTitle>
      <SimLogo s={11} />Simulator
      <SimWindowButtons>
        <Line s={8} w={2} c="#dde" d="M0 10h20" /><Line s={9} w={2} c="#dde" d="M2 6h12v12H2zM6 5V2h12v12h-3" /><Line s={9} w={2} c="#dde" d="M1 1l18 18M19 1L1 19" />
      </SimWindowButtons>
    </SimTitle>
    <SimTools>{simTools.map((t, i) => <SimTool key={i} $w={t.w}>{t.node}</SimTool>)}</SimTools>
    <SimBody>
      <SimLeft>
        <Group $w={121} $h={37}>Dynamic Port Circuit<Fields $tight>In:<Field $w={16} />Out:<Field $w={16} /><SmallButton $w={38}>Set Port</SmallButton></Fields></Group>
        <Group $w={114} $h={37}><div>Set Labels and Names</div><Fields><Field $w={40} /><SmallButton $w={27}>Label</SmallButton><SmallButton $w={30}>Name</SmallButton></Fields></Group>
        <Group $w={71} $h={37}><div>Memory</div><Fields><SmallButton $w={25}>Load</SmallButton><SmallButton $w={30}>Show</SmallButton></Fields></Group>
        <Group $w={99} $h={37}><div>Controller ASM Chart</div><Fields><SmallButton $w={24}>New</SmallButton><SmallButton $w={21}>Edit</SmallButton><SmallButton $w={28}>Show</SmallButton></Fields></Group>
        <Group $w={124} $h={72}>Controller Current State<ScrollArea><Arrow /><Arrow down /></ScrollArea></Group>
        <Group $w={124} $h={60} $gap={5}>Component Name<ScrollArea><Arrow /><Arrow down /></ScrollArea></Group>
        <Group $w={124} $h={41}>User Identification<ScrollArea><Arrow /><Arrow down /></ScrollArea></Group>
      </SimLeft>
      <Canvas>
        <Circuit />
        <ShareBar><PauseMark />meet.google.com is sharing your screen.<StopButton>Stop sharing</StopButton><HideLink>Hide</HideLink></ShareBar>
      </Canvas>
      <Splitter><Line s={4} w={3} c="#777" d="M4 2l10 8-10 8z" /></Splitter>
      <Palette>
        <PaletteHead>Palette</PaletteHead>
        <PaletteItem $on><Cursor />SelectionTool</PaletteItem>
        <PaletteItem><svg width="8" height="9"><path d="M.5.5h4v3h-4zM5 3v2M4.500 5.500h3v3h-3z" fill="none" stroke="#667" /></svg>Connection</PaletteItem>
        <PaletteItem><Cursor />Clone Tool</PaletteItem>
        <PaletteItem><svg width="10" height="10"><path d="M0 5h10M5 0v10" stroke="#222" /><circle cx="5" cy="5" r="3.500" fill="#222" /></svg>Bus Connector</PaletteItem>
        <PaletteItem><svg width="9" height="9"><path d="M1 1h7v7H1z" fill="none" stroke="#789" strokeDasharray="2 1" /></svg>MarqueeTool</PaletteItem>
        <Drawer $first><svg width="7" height="9"><path d="M0 0h4v3H0z" fill="#c33" /><path d="M1 9l3-6 3 6z" fill="#66c" /></svg>Circuits &amp; Label</Drawer>
        <Drawer><svg width="7" height="9"><path d="M1 0v3M6 0v3" stroke="#333" /><circle cx="3.500" cy="5.500" r="3" fill="#e3d21c" stroke="#443" /></svg>Logic Gates</Drawer>
        <Drawer $flat><svg width="15" height="9"><path d="M0 4.500h15" stroke="#d9a93a" strokeWidth="1.500" /><path d="M4 0h7v9H4z" fill="#7ba9b8" /></svg>Input/Output</Drawer>
        <PaletteItem><svg width="6" height="9"><path d="M0 0h6v8H0z" fill="#173d20" /><path d="M3 2v4" stroke="#d90" /></svg>Bit Display</PaletteItem>
        <PaletteItem><Chip c="#a9a8cf" m="#335" />Clock Pulse</PaletteItem>
        <PaletteItem><svg width="8" height="9"><circle cx="4" cy="4" r="4" fill="#16aec4" /><circle cx="4" cy="4" r="1.500" fill="none" stroke="#066" /></svg>Bit Switch</PaletteItem>
        <PaletteItem><Chip c="#1c4a26" m="#b80" />Digital Display</PaletteItem>
        <DrawerStack>
          <Drawer>&nbsp;Σ Adders</Drawer>
          <Drawer><svg width="12" height="8"><path d="M0 2h12v6H0z" fill="#999" /><path d="M3 0h6v5H3z" fill="#d48a80" /></svg>Sequencial Ckts</Drawer>
          <Drawer><svg width="6" height="10"><path d="M0 0h6v10H0z" fill="#b5d8b8" /><path d="M.5 0v10M5.500 0v10" stroke="#575" /></svg>Other Components</Drawer>
          <Drawer><svg width="11" height="10"><path d="M5.500 1L1 8.500h9z" fill="#fff" stroke="#666" /><circle cx="1.800" cy="8" r="1.500" fill="#d9a800" /><circle cx="9" cy="8" r="1.500" fill="#c33" /></svg>Control Unit</Drawer>
          <Drawer><svg width="8" height="10"><path d="M.5.500h7v6h-7z" fill="#6fa8ec" stroke="#222" /><path d="M0 8h8v2H0z" fill="#633" /></svg>Computer Design</Drawer>
        </DrawerStack>
      </Palette>
    </SimBody>
    <SimTaskbar>
      <SimWeather><CloudIcon s={20} night /><div>28°C<br />Mostly cloudy</div></SimWeather>
      <WinLogo s={19} id="winSmall" />
      <SimSearch><Line s={12} w={2} c="#ddd" d="M8.500 2a6.500 6.500 0 1 1 0 13 6.500 6.500 0 0 1 0-13M13.500 13.500L19 19" />Search</SimSearch>
      <SimSlot><TaskView s={19} dark="#5d6164" /></SimSlot>
      <SimSlot><ChatLogo s={19} /></SimSlot>
      <SimSlot><Mail /><MailBadge>2</MailBadge></SimSlot>
      <SimSlot><Chrome /></SimSlot>
      <SimSlot><FaSpotify size={19} color="#1ed760" /></SimSlot>
      <SimSlot $dot><EdgeLogo s={20} /></SimSlot>
      <SimSlot><FolderLogo s={20} /></SimSlot>
      <SimSlot><Camera /></SimSlot>
      <SimSlot $on><SimLogo s={19} /><PointerMark width="5" height="6"><path d="M0 0l4.500 4H2.500L1 5.500z" fill="#fff" /></PointerMark></SimSlot>
      <SimTray>
        <Line s={9} w={2.2} c="#ddd" d="M2 14l8-8 8 8" />
        <TraySlot $w={42}><svg width="14" height="9"><path d="M3 9a3 3 0 0 1 0-6 4 4 0 0 1 7 0 3 3 0 0 1 1 6z" fill="#e8e8e8" /></svg></TraySlot>
        <TraySlot $w={11}><Line s={14} c="#ddd" d={MIC} /></TraySlot>
        <TrayText $w={47}>ENG<br />IN</TrayText>
        <TraySlot $w={16}><Line s={14} w={1.5} c="#eee" d={WIFI} /></TraySlot>
        <TraySlot $w={23}><Line s={13} w={1.5} c="#eee" d={VOL} /></TraySlot>
        <TraySlot $w={16}><svg width="14" height="10"><path d="M0 3h12v7H0z" fill="#eee" /><path d="M12 5h2v3h-2zM2 0h3v3H2z" fill="#eee" /></svg></TraySlot>
        <TrayText $w={56} $right>19:53<br />8/25/2023</TrayText>
      </SimTray>
    </SimTaskbar>
  </Shared>
);

/* ---------- people ---------- */

const raised = [["F", "#c2185b", "Fayola Menezes"], ["K", "#ef6c00", "Khushi Mehta"], ["N", "#c2185b", "Navya"], ["m", "#ef6c00", "mokshada rane"], ["m", "#512da8", "mohika rane"]];

const PeoplePanel = () => (
  <Panel>
    <PanelHead>People<MdClose size={29} /></PanelHead>
    <PanelBody>
      <div>
        <SearchBox><MdSearch size={30} />Search for people</SearchBox>
        <SectionName>IN MEETING</SectionName>
        <Card>
          <CardHead>Raised hands<b>5</b><CollapseMark /></CardHead>
          <OrderNote>(first to last)</OrderNote>
          {raised.map(([l, c, n]) => (
            <Person key={n}>
              <Avatar $s={40} $c={c} $f={l === "N" ? 31 : 22}>{l}</Avatar>
              <PersonText>{n}<DomainBadge><MdDomainDisabled size={14} /></DomainBadge></PersonText>
              <PersonActions><HandSlot><RaisedHand h={30} /></HandSlot></PersonActions>
            </Person>
          ))}
        </Card>
        <Card>
          <CardHead>Contributors<b>18</b><CollapseMark /></CardHead>
          <Person>
            <Avatar $s={40} $c="#78909c" $f={22}>V</Avatar>
            <PersonText $regular>VIVIAN (You)<DomainBadge><MdDomainDisabled size={14} /></DomainBadge></PersonText>
            <PersonActions><MdOutlineMicOff size={30} /><MdMoreVert size={30} /></PersonActions>
          </Person>
          <Person>
            <Photo />
            <PersonText $regular>Aashish Mhaske<DomainBadge /></PersonText>
            <PersonActions />
          </Person>
        </Card>
      </div>
      <ScrollThumb />
    </PanelBody>
  </Panel>
);

export default function App() {
  return (
    <Screen>
      <Global />
      <TabStrip>
        <StripButton $w={59}>
          <svg width="19" height="19" viewBox="0 0 19 19"><rect x="1" y="1" width="17" height="17" rx="3" fill="none" stroke="#111" strokeWidth="1.500" /><path d="M1 6V4q0-3 3-3h11q3 0 3 3v2z" fill="#111" /><path d="M6 6v12" stroke="#111" strokeWidth="1.300" /></svg>
        </StripButton>
        <Tab><MeetLogo /><RecordMark />Meet - ksm-xpib-man<Line s={11} w={2.5} d="M1 1l18 18M19 1L1 19" /></Tab>
        <StripButton $w={44}><Line s={17} w={1.4} d="M10 0v20M0 10h20" /></StripButton>
        <WindowButtons>
          <StripButton $w={57}><Line s={13} w={1.6} d="M0 9.500h20" /></StripButton>
          <StripButton $w={57}><Line s={14} w={1.6} d="M1 6q0-2 2-2h11q2 0 2 2v11q0 2-2 2H3q-2 0-2-2zM5 1h11q3 0 3 3v11" /></StripButton>
          <StripButton $w={57}><Line s={13} w={1.6} d="M0 0l20 20M20 0L0 20" /></StripButton>
        </WindowButtons>
      </TabStrip>
      <Toolbar>
        <Line s={24} c="#cfcfcf" d="M18 10H2M9 3L2 10l7 7" w={1.1} />
        <ToolSlot $w={32} /><Line s={22} d="M17 4.500A8.300 8.300 0 1 0 18.300 10M18 1v4.500h-4.500" w={1.3} />
        <Address>
          <svg width="20" height="22" viewBox="0 0 20 22" fill="none" stroke="#666" strokeWidth="1.400"><rect x="2.500" y="8" width="15" height="12" rx="2" /><path d="M6.500 8V5.500a3.500 3.500 0 0 1 7 0V8" /><circle cx="10" cy="14" r=".7" fill="#666" /></svg>
          <span>https://<b>meet.google.com</b>/ksm-xpib-man</span>
          <AddressIcons>
            <Line s={24} c="#767676" w={1.1} d="M3.500 4h8q2 0 2 2v8q0 2-2 2h-8q-2 0-2-2V6q0-2 2-2zM13.500 8.500l4.500-3v9l-4.500-3" />
            <Line s={24} c="#767676" w={1.1} d="M2.500 17L8 4 13.500 17M4.500 12.500h7M12 4c1.500 1 2 2.500 2 4M14.500 2c2.500 1.500 3.500 4 3.300 7" />
            <Line s={24} c="#767676" w={1.1} d={STAR} />
          </AddressIcons>
        </Address>
        <ToolIcons>
          <ToolSlot><Line s={22} w={1.3} d="M8 3.500H3.500q-2 0-2 2v9q0 2 2 2H8M12 3.500h4.500q2 0 2 2v9q0 2-2 2H12M10 1v18" /></ToolSlot>
          <ToolSlot><Line s={23} w={1.2} d="M12.500 7.500L11 7 8.500 2 6 7.200l-5 .8 3.800 3.700-.9 5.300 4.600-2.500M13 7.500h6M11.500 11h7.500M13 14.500h6" /></ToolSlot>
          <ToolSlot><Line s={23} w={1.2} d="M8.500 7.500h8q2 0 2 2v7q0 2-2 2h-8q-2 0-2-2v-7q0-2 2-2zM12.500 10v6M9.500 13h6M4.500 14L1.500 5.500q-.5-2 1.500-2.500l7-2q2-.3 2.500 1.500l.6 2" /></ToolSlot>
          <ToolSlot>
            <svg width="22" height="22" viewBox="0 0 22 22"><path d="M10.500 18L1.500 9C-1 4 5-.5 10.500 4 16-.5 22 4 19.500 9z" fill="#111" /><path d="M0 9.500h5l2-4 3 7 3-7 2 4h6" fill="none" stroke="#f7f7f7" strokeWidth="1.400" /><circle cx="17" cy="17" r="4.700" fill="#107c10" /><path d="M15 17l1.500 1.500 2.500-3" fill="none" stroke="#fff" /></svg>
          </ToolSlot>
          <ToolSlot $w={61}>
            <svg width="28" height="28" viewBox="0 0 28 28"><circle cx="14" cy="14" r="14" fill="#d5d2d0" /><circle cx="14" cy="10" r="6" fill="#8a8886" /><path d="M5 21q0-4 4-4h10q4 0 4 4c-3 7-15 7-18 0z" fill="#8a8886" /></svg>
          </ToolSlot>
          <ToolSlot $w={53}><svg width="18" height="4"><circle cx="2.500" cy="2" r="1.600" /><circle cx="9" cy="2" r="1.600" /><circle cx="15.500" cy="2" r="1.600" /></svg></ToolSlot>
          <ToolSlot $w={53}><Bing s={38} /></ToolSlot>
        </ToolIcons>
      </Toolbar>
      <Body>
        <Meet>
          <Stage>
            <StageHead>
              <DomainButton><MdDomainDisabled size={25} /></DomainButton>
              <PresenterBar><Avatar $s={30} $c="#c2185b" $f={17}>F</Avatar><span>Fayola Menezes (Presenting)</span></PresenterBar>
            </StageHead>
            <Simulator />
            <Tiles>
              <Tile $active>
                <VoiceRing><Avatar $s={92} $c="#455a64" $f={50}>h</Avatar></VoiceRing>
                <TileChip $c="#1a6fe0"><i /><i /><i /></TileChip>
                <TileName>heenak.pendhari CRCE</TileName>
              </Tile>
              <Tile>
                <Avatar $s={92} $c="#c2185b" $f={50}>F</Avatar>
                <TileChip $c="#333639"><MdMicOff size={20} /></TileChip>
                <HandPill><RaisedHand h={18} w={3} />Fayola Menezes</HandPill>
              </Tile>
              <Tile>
                <Pair><Avatar $s={61} $c="#ef6c00" $f={32}>K</Avatar><Avatar $s={61} $c="#c2185b" $f={47}>N</Avatar></Pair>
                <Others>14 others</Others>
              </Tile>
              <Tile $last>
                <Avatar $s={92} $c="#78909c" $f={50}>V</Avatar>
                <TileChip $c="#333639"><MdMicOff size={20} /></TileChip>
                <TileName>VIVIAN</TileName>
              </Tile>
            </Tiles>
          </Stage>
          <PeoplePanel />
          <BottomBar>
            <Clock>7:53 PM<i /><span>ksm-xpib-man</span></Clock>
            <Controls>
              <Round $red><MdMicOff size={24} /></Round>
              <Round $red><MdOutlineVideocamOff size={26} /></Round>
              <Round><CcIcon /></Round>
              <Round><MdOutlineEmojiEmotions size={31} /></Round>
              <Round><MdOutlinePresentToAll size={31} /></Round>
              <Round><MdOutlineBackHand size={30} /></Round>
              <Round><MdMoreVert size={30} /></Round>
              <Round $red $w={70}><MdCallEnd size={32} /></Round>
            </Controls>
            <PanelButtons>
              <MdInfoOutline size={30} />
              <Counted><MdPeople size={31} /><span>18</span></Counted>
              <MdOutlineChat size={30} />
              <MdOutlineCategory size={30} />
            </PanelButtons>
          </BottomBar>
        </Meet>
        <Sidebar>
          {sideIcons.map((n, i) => <SideSlot key={i}>{n}</SideSlot>)}
          <PlusSlot><Line s={17} d="M10 1v18M1 10h18" w={1.6} c="#444" /></PlusSlot>
          <SideRule />
          <SideSlot><Line s={20} w={1.5} d="M4 2h12q3 0 3 3v10q0 3-3 3H4q-3 0-3-3V5q0-3 3-3zM13 2v16" /></SideSlot>
          <SideSlot><Line s={23} w={1.3} d="M8.500 1.500h3l.6 2.600 1.800 1 2.600-.8 1.500 2.600-2 1.900v2.400l2 1.900-1.500 2.600-2.600-.8-1.800 1-.6 2.600h-3l-.6-2.600-1.800-1-2.600.8L2 13.100l2-1.900V8.800L2 6.900l1.500-2.600 2.600.8 1.800-1zM10 7.500a2.500 2.500 0 1 1 0 5 2.500 2.500 0 0 1 0-5z" /></SideSlot>
        </Sidebar>
      </Body>
      <Taskbar>
        <Weather><CloudIcon s={31} /><div>28°C<small>Mostly cloudy</small></div></Weather>
        <WinLogo s={29} id="winBig" />
        <SearchPill><Line s={20} w={2} c="#333" d="M8.500 1.500a7 7 0 1 1 0 14 7 7 0 0 1 0-14M13.500 13.500L19 19" /><span>Search</span><Bing s={26} /></SearchPill>
        <TaskSlot><TaskView s={30} dark="#2a2a2a" /></TaskSlot>
        <TaskSlot><ChatLogo s={29} /></TaskSlot>
        <TaskSlot $dot><FolderLogo s={30} /></TaskSlot>
        <TaskSlot $on><EdgeLogo s={31} /></TaskSlot>
        <TaskSlot><StoreLogo /></TaskSlot>
        <TaskSlot><LogoL>L</LogoL></TaskSlot>
        <TaskSlot $dot><SimLogo s={29} /></TaskSlot>
        <Tray>
          <TraySlot $w={40}><Line s={15} w={2} d="M1 14l9-8 9 8" /></TraySlot>
          <TraySlot $w={40}><svg width="21" height="14" viewBox="0 0 21 14"><path d="M5 13a4 4 0 0 1-.5-8A6 6 0 0 1 15.500 4.500 4.500 4.500 0 0 1 16 13z" fill="#c6c6c6" stroke="#222" strokeWidth="1.200" /><path d="M4 5.500c4-1 6 1 9 3" stroke="#777" fill="none" /></svg></TraySlot>
          <TraySlot $w={40}><svg width="21" height="21" viewBox="0 0 21 21" fill="none" stroke="#222" strokeWidth="1.300"><path d="M1 9C1.500 0 14 -2 18.500 6M19 1v5.500h-5.500M1.500 19.500v-5H7M2 15c1 2.500 4 4.500 7 4.500" /><circle cx="15.500" cy="15.500" r="5" fill="#f7941d" stroke="none" /></svg></TraySlot>
          <TraySlot $w={40}><Line s={21} w={1.4} c="#1f57a8" d={MIC} /></TraySlot>
          <TrayText $w={56}>ENG<br />IN</TrayText>
          <TraySlot $w={37}><Line s={22} w={1.2} d={WIFI} /></TraySlot>
          <TraySlot $w={24}><Line s={20} w={1.2} d={VOL} /></TraySlot>
          <TraySlot $w={36}><svg width="22" height="18" viewBox="0 0 22 18"><path d="M6 5h12v10H3q-1 0-1-1v-2M18 8h2.500v4H18" fill="none" stroke="#222" strokeWidth="1.300" /><path d="M1 11C-1 4 4 4 7 0c2 5 1 10-5 10z" fill="#111" /></svg></TraySlot>
          <DateText $w={90} $right>19:53<br />25-08-2023</DateText>
          <Notice>1</Notice>
        </Tray>
      </Taskbar>
    </Screen>
  );
}
